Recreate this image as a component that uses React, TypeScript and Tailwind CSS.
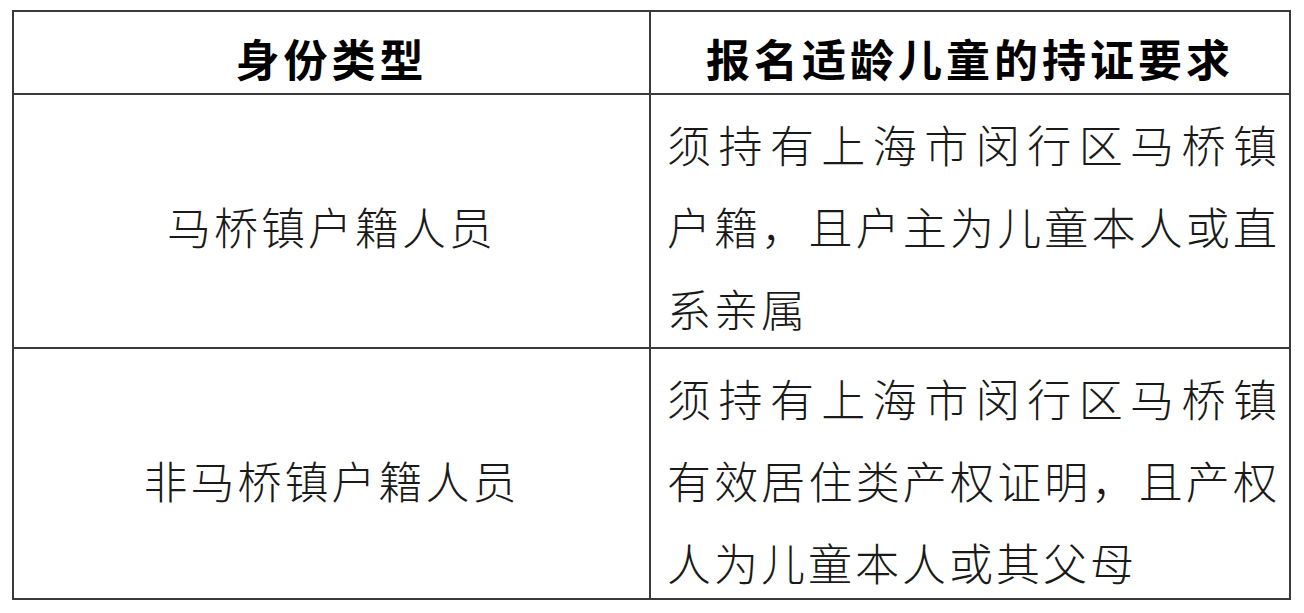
const rows = [
  {
    type: '马桥镇户籍人员',
    lines: ['须持有上海市闵行区马桥镇', '户籍，且户主为儿童本人或直', '系亲属'],
  },
  {
    type: '非马桥镇户籍人员',
    lines: ['须持有上海市闵行区马桥镇', '有效居住类产权证明，且产权', '人为儿童本人或其父母'],
  },
];

export default function App() {
  return (
    <div className="min-h-screen bg-white pl-[12px] pt-[10px] font-['Noto_Sans_CJK_SC',sans-serif] text-[#1a1a1a]">
      <div className="grid w-[1279px] grid-cols-[637px_1fr] border-2 border-[#3a3a3a]">
        {/* header */}
        <div className="h-[83px] border-r-2 border-b-2 border-[#3a3a3a] pt-[10px] text-center text-[44px] leading-[73px] font-bold tracking-[4px] text-black">
          身份类型
        </div>
        <div className="h-[83px] border-b-2 border-[#3a3a3a] pt-[10px] text-center text-[44px] leading-[73px] font-bold tracking-[4px] text-black">
          报名适龄儿童的持证要求
        </div>

        {rows.map((row, i) => {
          const last = i === rows.length - 1;
          return (
            <div key={row.type} className="contents">
              <div
                className={`border-r-2 border-[#3a3a3a] pt-[90px] text-center text-[44px] leading-[82px] font-light tracking-[3px] ${
                  last ? 'h-[249px]' : 'h-[254px] border-b-2'
                }`}
              >
                {row.type}
              </div>
              <div
                className={`border-[#3a3a3a] pt-[8px] pl-[16px] pr-[9px] text-[44px] leading-[82px] font-light tracking-[3px] ${
                  last ? 'h-[249px]' : 'h-[254px] border-b-2'
                }`}
              >
                {row.lines.map((line, j) => (
                  <div
                    key={j}
                    className={
                      j < row.lines.length - 1
                        ? 'whitespace-nowrap text-justify [text-align-last:justify]'
                        : 'whitespace-nowrap text-left'
                    }
                  >
                    {line}
                  </div>
                ))}
              </div>
            </div>
          );
        })}
      </div>
    </div>
  );
}
